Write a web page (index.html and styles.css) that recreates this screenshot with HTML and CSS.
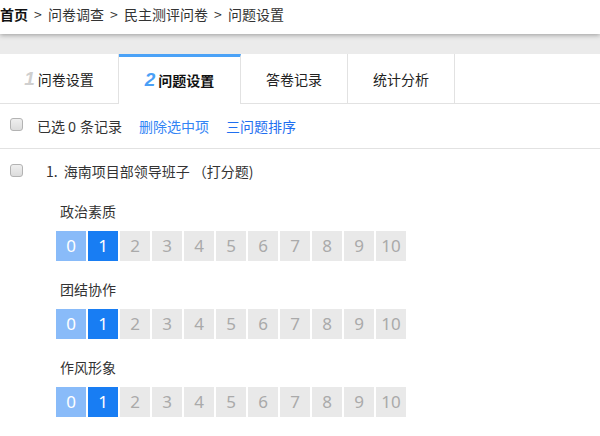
FILE: index.html
```html
<!DOCTYPE html>
<html lang="zh-CN">
<head>
<meta charset="utf-8">
<title>问题设置</title>
<link rel="stylesheet" href="styles.css">
</head>
<body>
<div class="header">
  <span class="crumb home">首页</span><span class="sep">&gt;</span><span class="crumb">问卷调查</span><span class="sep">&gt;</span><span class="crumb">民主测评问卷</span><span class="sep">&gt;</span><span class="crumb">问题设置</span>
</div>
<div class="band"></div>
<div class="tabs">
  <div class="tab t1"><span class="tnum gray">1</span>问卷设置</div>
  <div class="tab t2 active"><span class="tnum blue">2</span>问题设置</div>
  <div class="tab t3">答卷记录</div>
  <div class="tab t4">统计分析</div>
</div>
<div class="toolbar">
  <span class="cb"></span>
  <span class="sel">已选<span class="zero">0</span>条记录</span>
  <a class="link">删除选中项</a>
  <a class="link link2">三问题排序</a>
</div>
<div class="qrow">
  <span class="cb"></span>
  <span class="qtitle"><span class="qno">1.</span>海南项目部领导班子 （打分题)</span>
</div>
<div class="items">
  <div class="item">
    <div class="label">政治素质</div>
    <div class="scores">
      <span class="s s-light">0</span><span class="s s-on">1</span><span class="s">2</span><span class="s">3</span><span class="s">4</span><span class="s">5</span><span class="s">6</span><span class="s">7</span><span class="s">8</span><span class="s">9</span><span class="s">10</span>
    </div>
  </div>
  <div class="item">
    <div class="label">团结协作</div>
    <div class="scores">
      <span class="s s-light">0</span><span class="s s-on">1</span><span class="s">2</span><span class="s">3</span><span class="s">4</span><span class="s">5</span><span class="s">6</span><span class="s">7</span><span class="s">8</span><span class="s">9</span><span class="s">10</span>
    </div>
  </div>
  <div class="item">
    <div class="label">作风形象</div>
    <div class="scores">
      <span class="s s-light">0</span><span class="s s-on">1</span><span class="s">2</span><span class="s">3</span><span class="s">4</span><span class="s">5</span><span class="s">6</span><span class="s">7</span><span class="s">8</span><span class="s">9</span><span class="s">10</span>
    </div>
  </div>
</div>
</body>
</html>
```
FILE: styles.css
```css
html, body {
  margin: 0;
  padding: 0;
  background: #fff;
}
body {
  font-family: "Noto Sans CJK SC", "Noto Sans", sans-serif;
  font-size: 14px;
  color: #333;
  overflow: hidden;
}
.header {
  position: relative;
  z-index: 1;
  height: 34px;
  line-height: 28px;
  background: #fff;
  box-shadow: 0 1px 5px rgba(0,0,0,0.35);
  white-space: nowrap;
}
.crumb { color: #333; }
.home { color: #111; font-weight: bold; }
.sep {
  display: inline-block;
  width: 20px;
  text-align: center;
  color: #333;
}
.band {
  height: 20px;
  background: #ebebeb;
}
.tabs {
  display: flex;
  height: 49px;
  border-bottom: 1px solid #e2e2e2;
  background: #fff;
}
.tab {
  display: flex;
  align-items: center;
  justify-content: center;
  box-sizing: border-box;
  height: 50px;
  border-right: 1px solid #e2e2e2;
  color: #222;
}
.t1 { width: 119px; }
.t2 { width: 122px; }
.t3 { width: 107px; }
.t4 { width: 107px; }
.tab.active {
  border-top: 3px solid #4ba2f7;
  background: #fff;
  color: #111;
  font-weight: 600;
  padding-bottom: 2px;
}
.tnum {
  font-family: "Liberation Sans", Arial, sans-serif;
  font-style: italic;
  font-weight: bold;
  font-size: 19px;
  margin-right: 3px;
}
.gray { color: #cfcfcf; }
.blue { color: #4a9ff6; }
.toolbar {
  display: flex;
  align-items: center;
  height: 44px;
  padding-left: 10px;
  border-bottom: 1px solid #e2e2e2;
}
.cb {
  display: inline-block;
  box-sizing: border-box;
  width: 13px;
  height: 13px;
  border: 1px solid #b3b3b3;
  border-radius: 3px;
  background: linear-gradient(#efefef, #dcdcdc);
}
.toolbar .cb { margin-right: 14px; margin-top: -3px; }
.sel { color: #333; margin-right: 17px; }
.zero { margin: 0 4px 0 3px; font-family: "Noto Sans", sans-serif; }
.link { color: #3385f5; margin-right: 17px; }
.link2 { color: #1f6ff0; }
.qrow {
  display: flex;
  align-items: center;
  height: 44px;
  padding-left: 10px;
}
.qrow .cb { margin-right: 23px; margin-top: -1px; }
.qtitle { color: #333; }
.qno { margin-right: 6px; }
.items {
  padding: 8px 0 0 56px;
}
.item { margin-bottom: 18px; }
.label {
  height: 20px;
  line-height: 20px;
  padding-left: 4px;
  margin-bottom: 10px;
  color: #333;
}
.scores {
  display: flex;
  gap: 2px;
}
.s {
  width: 30px;
  height: 30px;
  line-height: 30px;
  text-align: center;
  background: #e9e9e9;
  color: #aaa;
  font-family: "Noto Sans", sans-serif;
  font-size: 17px;
}
.s-light { background: #89bbf9; color: #fff; }
.s-on { background: #187df3; color: #fff; }
```
